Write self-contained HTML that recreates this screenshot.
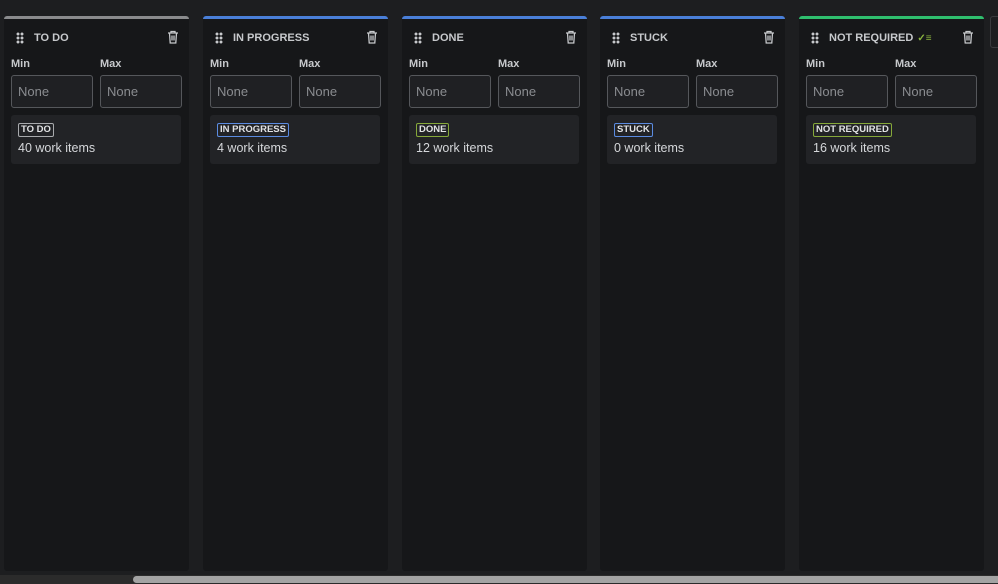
<!DOCTYPE html>
<html><head><style>
body{margin:0;width:998px;height:584px;background:#1d1e20;font-family:"Liberation Sans",sans-serif;overflow:hidden;position:relative;color:#c7c9cc}
.col{position:absolute;top:16px;width:185px;height:555px;background:#161719;border-radius:3px;overflow:hidden}
.bar{height:3px}
.hd{position:absolute;top:14px;left:12px;right:10px;height:16px;font-size:11px;font-weight:bold;color:#c7c9cc;display:flex;align-items:center}
.dots{width:8px;height:12px;margin-right:10px;background:radial-gradient(circle,#c7c9cc 1.3px,transparent 1.6px) 0 0/4px 4px}
.trash{position:absolute;right:0;top:0}
.lbl{position:absolute;top:42px;font-size:11px;font-weight:bold}
.inp{position:absolute;top:59px;width:82px;height:33px;border:1px solid #55575b;border-radius:3px;background:#1f2023;color:#8a8c90;font-size:13px;line-height:31px;padding-left:6px;box-sizing:border-box}
.card{position:absolute;left:7px;top:99px;width:170px;height:49px;background:#222326;border-radius:3px}
.badge{position:absolute;left:7px;top:8px;font-size:9.5px;font-weight:bold;color:#e2e3e5;border:1px solid;border-radius:2px;padding:1px 2px;line-height:10px}
.cnt{position:absolute;left:7px;top:26px;font-size:12.5px;color:#d5d7da}
.sb{position:absolute;left:0;top:575px;width:998px;height:9px;background:#2b2b2b}
.th{position:absolute;left:133px;top:576px;width:870px;height:7px;background:#a3a3a3;border-radius:4px}
</style></head><body>
<div style="position:absolute;left:990px;top:16px;width:12px;height:30px;border:1px solid #3a3b3e;border-radius:3px"></div>

<div class="col" style="left:4px"><div class="bar" style="background:#8a8b8d"></div>
<div class="hd"><div class="dots"></div>TO DO<svg class="trash" width="12" height="14" viewBox="0 0 12 14" fill="none" stroke="#c7c9cc" stroke-width="1.3"><path d="M1 3h10M4 3V1.5h4V3M2.5 3l.7 10h5.6l.7-10M5 5.5v5M7 5.5v5"/></svg></div>
<div class="lbl" style="left:7px">Min</div><div class="lbl" style="left:96px">Max</div>
<div class="inp" style="left:7px">None</div><div class="inp" style="left:96px">None</div>
<div class="card"><span class="badge" style="border-color:#a8aaad">TO DO</span><div class="cnt">40 work items</div></div></div>

<div class="col" style="left:203px"><div class="bar" style="background:#4a7fd8"></div>
<div class="hd"><div class="dots"></div>IN PROGRESS<svg class="trash" width="12" height="14" viewBox="0 0 12 14" fill="none" stroke="#c7c9cc" stroke-width="1.3"><path d="M1 3h10M4 3V1.5h4V3M2.5 3l.7 10h5.6l.7-10M5 5.5v5M7 5.5v5"/></svg></div>
<div class="lbl" style="left:7px">Min</div><div class="lbl" style="left:96px">Max</div>
<div class="inp" style="left:7px">None</div><div class="inp" style="left:96px">None</div>
<div class="card"><span class="badge" style="border-color:#5b8be0">IN PROGRESS</span><div class="cnt">4 work items</div></div></div>

<div class="col" style="left:402px"><div class="bar" style="background:#4a7fd8"></div>
<div class="hd"><div class="dots"></div>DONE<svg class="trash" width="12" height="14" viewBox="0 0 12 14" fill="none" stroke="#c7c9cc" stroke-width="1.3"><path d="M1 3h10M4 3V1.5h4V3M2.5 3l.7 10h5.6l.7-10M5 5.5v5M7 5.5v5"/></svg></div>
<div class="lbl" style="left:7px">Min</div><div class="lbl" style="left:96px">Max</div>
<div class="inp" style="left:7px">None</div><div class="inp" style="left:96px">None</div>
<div class="card"><span class="badge" style="border-color:#86a83a">DONE</span><div class="cnt">12 work items</div></div></div>

<div class="col" style="left:600px"><div class="bar" style="background:#4a7fd8"></div>
<div class="hd"><div class="dots"></div>STUCK<svg class="trash" width="12" height="14" viewBox="0 0 12 14" fill="none" stroke="#c7c9cc" stroke-width="1.3"><path d="M1 3h10M4 3V1.5h4V3M2.5 3l.7 10h5.6l.7-10M5 5.5v5M7 5.5v5"/></svg></div>
<div class="lbl" style="left:7px">Min</div><div class="lbl" style="left:96px">Max</div>
<div class="inp" style="left:7px">None</div><div class="inp" style="left:96px">None</div>
<div class="card"><span class="badge" style="border-color:#5b8be0">STUCK</span><div class="cnt">0 work items</div></div></div>

<div class="col" style="left:799px"><div class="bar" style="background:#2fbf6e"></div>
<div class="hd"><div class="dots"></div>NOT REQUIRED<span style="color:#8ab33e;margin-left:4px;font-size:10px">✓≡</span><svg class="trash" width="12" height="14" viewBox="0 0 12 14" fill="none" stroke="#c7c9cc" stroke-width="1.3"><path d="M1 3h10M4 3V1.5h4V3M2.5 3l.7 10h5.6l.7-10M5 5.5v5M7 5.5v5"/></svg></div>
<div class="lbl" style="left:7px">Min</div><div class="lbl" style="left:96px">Max</div>
<div class="inp" style="left:7px">None</div><div class="inp" style="left:96px">None</div>
<div class="card"><span class="badge" style="border-color:#86a83a">NOT REQUIRED</span><div class="cnt">16 work items</div></div></div>

<div class="sb"></div><div class="th"></div>
</body></html>
